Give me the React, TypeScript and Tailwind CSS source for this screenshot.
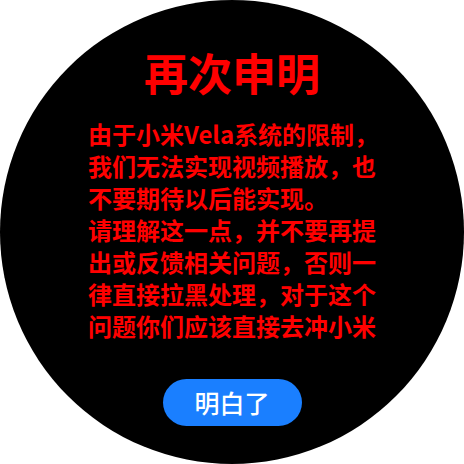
import React from "react";

const lines = [
  "由于小米Vela系统的限制，",
  "我们无法实现视频播放，也",
  "不要期待以后能实现。",
  "请理解这一点，并不要再提",
  "出或反馈相关问题，否则一",
  "律直接拉黑处理，对于这个",
  "问题你们应该直接去冲小米",
];

export default function App() {
  return (
    <div
      className="w-[464px] h-[464px] bg-white"
      style={{ fontFamily: '"Noto Sans CJK SC", "Noto Sans", sans-serif' }}
    >
      <div className="w-[464px] h-[464px] rounded-full bg-black flex flex-col items-center pt-[48px] overflow-hidden">
        <div className="text-[44px] leading-[48px] font-bold text-[#ff0000]">再次申明</div>
        <div className="mt-[22px] w-[288px] text-[24px] leading-[32px] font-bold text-[#ff0000]">
          {lines.map((l) => (
            <div key={l} className="whitespace-nowrap">
              {l}
            </div>
          ))}
        </div>
        <button className="mt-[37px] w-[139px] h-[47px] rounded-full bg-[#1a7fff] text-white text-[25px] leading-[47px] font-medium">
          明白了
        </button>
      </div>
    </div>
  );
}
